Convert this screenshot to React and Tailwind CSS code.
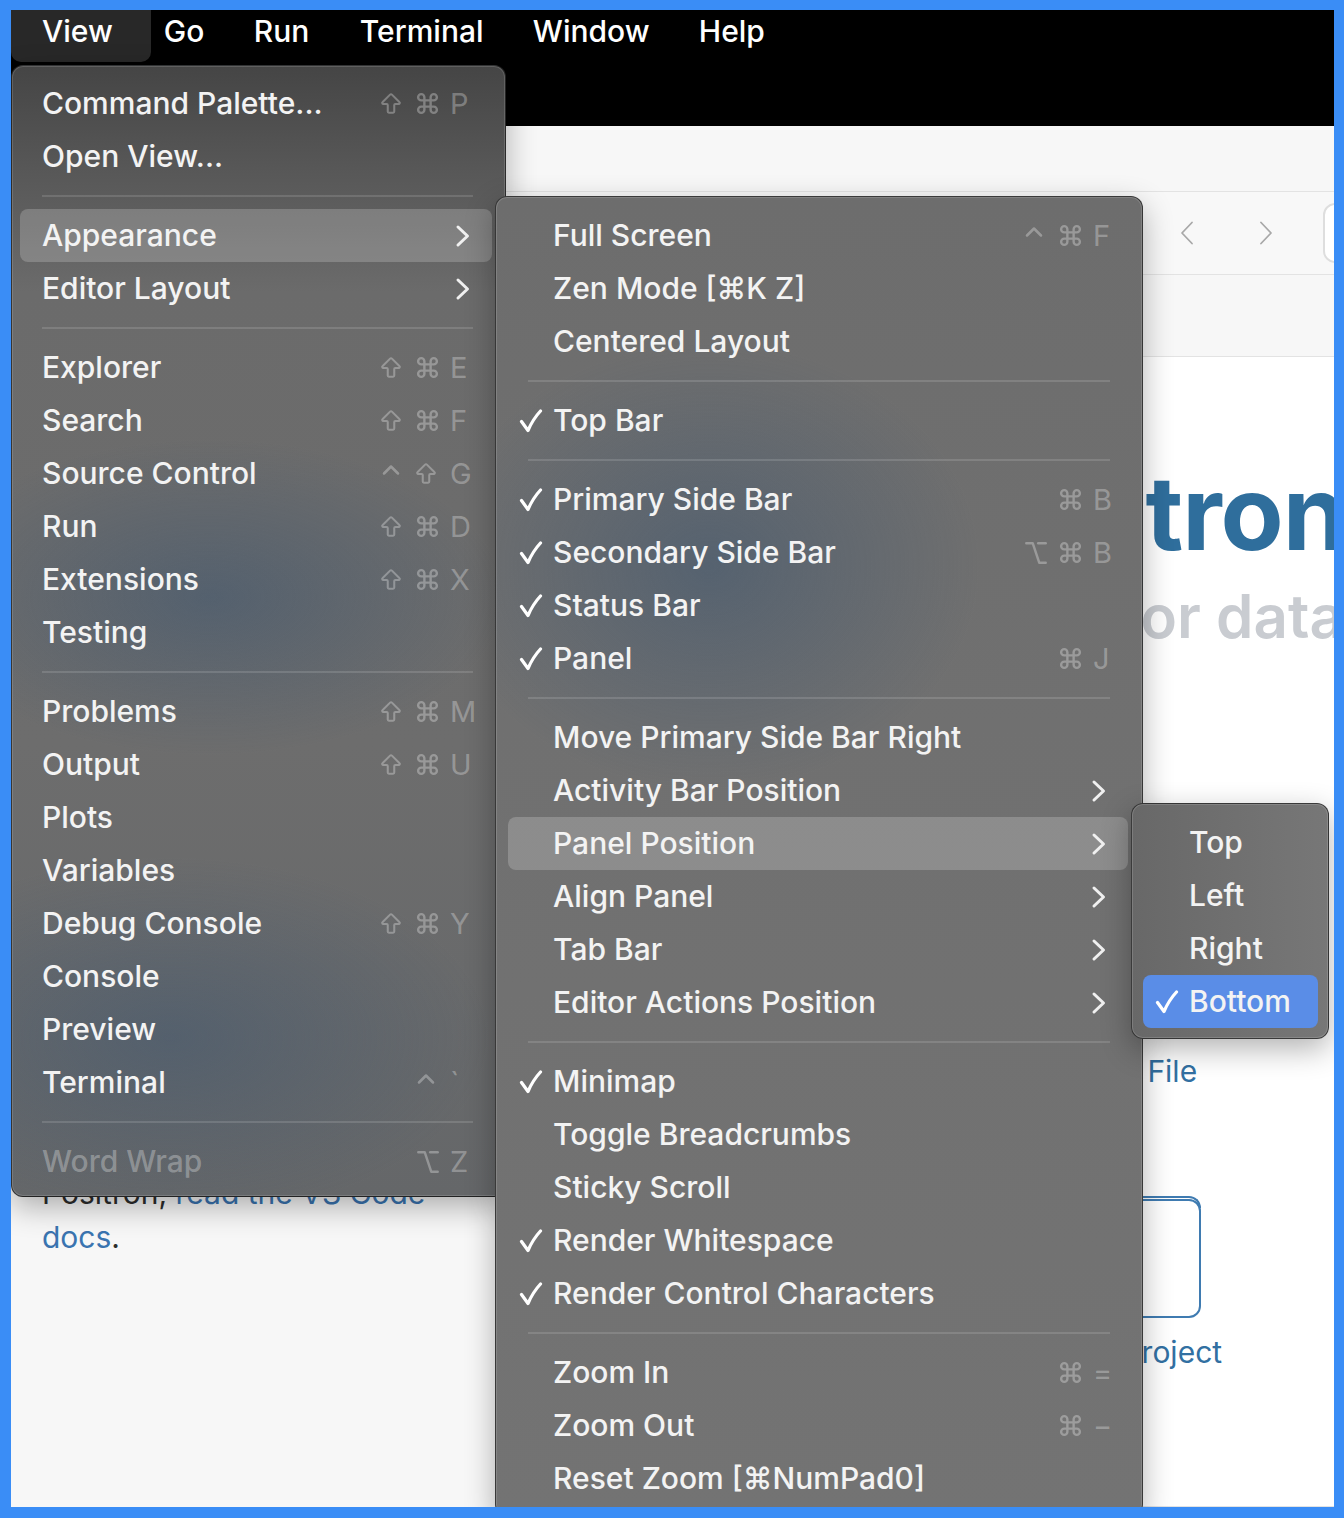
import React from "react";
import { ArrowBigUp, Command, ChevronUp, Option } from "lucide-react";

const SHIFT = "shift";
const CMD = "cmd";
const OPT = "opt";
const CTRL = "ctrl";

const viewMenu = [
  { label: "Command Palette...", keys: [SHIFT, CMD, "P"] },
  { label: "Open View..." },
  "sep",
  { label: "Appearance", sub: true, hl: true },
  { label: "Editor Layout", sub: true },
  "sep",
  { label: "Explorer", keys: [SHIFT, CMD, "E"] },
  { label: "Search", keys: [SHIFT, CMD, "F"] },
  { label: "Source Control", keys: [CTRL, SHIFT, "G"] },
  { label: "Run", keys: [SHIFT, CMD, "D"] },
  { label: "Extensions", keys: [SHIFT, CMD, "X"] },
  { label: "Testing" },
  "sep",
  { label: "Problems", keys: [SHIFT, CMD, "M"] },
  { label: "Output", keys: [SHIFT, CMD, "U"] },
  { label: "Plots" },
  { label: "Variables" },
  { label: "Debug Console", keys: [SHIFT, CMD, "Y"] },
  { label: "Console" },
  { label: "Preview" },
  { label: "Terminal", keys: [CTRL, "`"] },
  "sep",
  { label: "Word Wrap", keys: [OPT, "Z"], disabled: true },
];

const appearanceMenu = [
  { label: "Full Screen", keys: [CTRL, CMD, "F"] },
  { label: "Zen Mode [⌘K Z]" },
  { label: "Centered Layout" },
  "sep",
  { label: "Top Bar", check: true },
  "sep",
  { label: "Primary Side Bar", check: true, keys: [CMD, "B"] },
  { label: "Secondary Side Bar", check: true, keys: [OPT, CMD, "B"] },
  { label: "Status Bar", check: true },
  { label: "Panel", check: true, keys: [CMD, "J"] },
  "sep",
  { label: "Move Primary Side Bar Right" },
  { label: "Activity Bar Position", sub: true },
  { label: "Panel Position", sub: true, hl: true },
  { label: "Align Panel", sub: true },
  { label: "Tab Bar", sub: true },
  { label: "Editor Actions Position", sub: true },
  "sep",
  { label: "Minimap", check: true },
  { label: "Toggle Breadcrumbs" },
  { label: "Sticky Scroll" },
  { label: "Render Whitespace", check: true },
  { label: "Render Control Characters", check: true },
  "sep",
  { label: "Zoom In", keys: [CMD, "="] },
  { label: "Zoom Out", keys: [CMD, "−"] },
  { label: "Reset Zoom [⌘NumPad0]" },
];

const panelMenu = [
  { label: "Top" },
  { label: "Left" },
  { label: "Right" },
  { label: "Bottom", check: true, blue: true },
];

// per-menu paddings (all literal so tailwind picks them up)
const VARIANTS = {
  view: { row: "pl-[22px] pr-[18px]", check: false, chev: "mr-[4px]", sep: "pl-[22px] pr-[19px]" },
  appearance: { row: "pl-[11px] pr-[11px]", check: true, chev: "mr-[11px]", sep: "pl-[20px] pr-[18px]" },
  panel: { row: "pl-[12px] pr-[12px]", check: true, chev: "mr-[4px]", sep: "pl-[20px] pr-[18px]" },
};

const Check = () => (
  <svg viewBox="0 0 24 24" className="w-[24px] h-[24px]" fill="none" stroke="currentColor" strokeWidth={3.2} strokeLinecap="round" strokeLinejoin="round">
    <path d="M2.5 12.5 L9 21.5 Q14 10 21.5 2" />
  </svg>
);

const Chevron = ({ className = "" }) => (
  <svg viewBox="0 0 15 24" className={`ml-auto w-[15px] h-[24px] shrink-0 text-[#f0f0f0] ${className}`} fill="none" stroke="currentColor" strokeWidth={3} strokeLinecap="round" strokeLinejoin="round">
    <path d="M3 3 L12.5 12 L3 21" />
  </svg>
);

const ModKey = ({ k }) => {
  if (k === SHIFT) return <ArrowBigUp className="w-[26px] h-[26px] -ml-[2px]" strokeWidth={1.9} />;
  if (k === CMD) return <Command className="w-[25px] h-[25px]" strokeWidth={2.3} />;
  if (k === CTRL) return <ChevronUp className="w-[28px] h-[28px] -ml-[3px] -mt-[8px]" strokeWidth={2.2} />;
  return <Option className="w-[26px] h-[26px]" strokeWidth={2.2} />;
};

const Keys = ({ keys }) => {
  const mods = keys.slice(0, -1);
  const last = keys[keys.length - 1];
  return (
    <div className="ml-auto flex items-center text-white/30">
      {mods.map((m, i) => (
        <span key={i} className="w-[35px] flex items-center">
          <ModKey k={m} />
        </span>
      ))}
      <span className="w-[24px] text-[29px] leading-none">{last}</span>
    </div>
  );
};

function MenuRow({ item, variant }) {
  const v = VARIANTS[variant];
  let hl = "";
  if (item.hl) hl = "bg-white/20";
  if (item.blue) hl = "bg-[#5a8de7]";
  return (
    <div className={`flex items-center h-[53px] rounded-[8px] ${hl} ${v.row}`}>
      {v.check && (
        <span className="w-[34px] shrink-0 flex items-center text-white">{item.check && <Check />}</span>
      )}
      <span className={`text-[30px] font-medium whitespace-nowrap ${item.disabled ? "text-white/30" : "text-[#f3f3f3]"}`}>{item.label}</span>
      {item.keys && <Keys keys={item.keys} />}
      {item.sub && <Chevron className={v.chev} />}
    </div>
  );
}

function MenuList({ items, variant }) {
  const v = VARIANTS[variant];
  return items.map((item, i) =>
    item === "sep" ? (
      <div key={i} className={`h-[26px] flex items-center ${v.sep}`}>
        <div className="h-[2px] w-full bg-white/[0.13]" />
      </div>
    ) : (
      <MenuRow key={i} item={item} variant={variant} />
    )
  );
}

const ToolbarChevron = ({ left }) => (
  <svg viewBox="0 0 14 24" className="w-[14px] h-[24px] shrink-0 text-[#a8a8a8]" fill="none" stroke="currentColor" strokeWidth={1.8} strokeLinecap="round" strokeLinejoin="round">
    <path d={left ? "M12 1.5 L2 12 L12 22.5" : "M2 1.5 L12 12 L2 22.5"} />
  </svg>
);

export default function App() {
  return (
    <div className="w-[1344px] h-[1518px] bg-[#3a8df6] pl-[11px] pt-[10px] pr-[10px] pb-[11px] font-['Inter','Noto_Sans',sans-serif]">
      <div className="relative w-full h-full overflow-hidden flex flex-col bg-white">
        {/* black title area with the menubar */}
        <div className="h-[116px] bg-black shrink-0">
          <div className="flex items-start h-[52px] text-[30px] font-medium text-white">
            <div className="h-[52px] pl-[31px] pr-[38px] pb-[9px] flex items-center bg-[#282828] rounded-b-[10px]">View</div>
            <span className="ml-[13px] w-[90px] h-[43px] flex items-center">Go</span>
            <span className="w-[106px] h-[43px] flex items-center">Run</span>
            <span className="w-[173px] h-[43px] flex items-center">Terminal</span>
            <span className="w-[166px] h-[43px] flex items-center">Window</span>
            <span className="h-[43px] flex items-center">Help</span>
          </div>
        </div>

        {/* window toolbars */}
        <div className="h-[66px] shrink-0 bg-[#f7f7f7] border-b border-[#e3e3e3]" />
        <div className="h-[83px] shrink-0 bg-[#f8f8f8] border-b border-[#e3e3e3] flex items-center pl-[1169px]">
          <ToolbarChevron left />
          <div className="w-[65px] shrink-0" />
          <ToolbarChevron />
          <div className="ml-[50px] w-[300px] h-[60px] shrink-0 rounded-[12px] border-2 border-[#dedede] bg-white" />
        </div>
        <div className="h-[82px] shrink-0 bg-[#f7f7f7] border-b border-[#e3e3e3]" />

        {/* body */}
        <div className="flex-1 flex min-h-0">
          <div className="w-[790px] shrink-0 bg-[#f7f7f7] pl-[31px] pt-[770px]">
            <p className="text-[30px] leading-[44px] text-[#2d2d2d] whitespace-nowrap">
              Some features are inherited from VS Code, so in
              <br />
              Positron, <span className="text-[#3a74b0]">read the VS Code</span>
              <br />
              <span className="text-[#3a74b0]">docs</span>.
            </p>
          </div>
          <div className="flex-1 bg-white flex flex-col overflow-hidden border-b border-[#e3e3e3]">
            <h1 className="ml-[134px] mt-[104px] text-[103px] leading-none font-bold tracking-[-0.01em] text-[#2f6e9c] whitespace-nowrap">Positron</h1>
            <p className="ml-[120px] mt-[22px] text-[60px] leading-none font-semibold text-[#c9ccd1] whitespace-nowrap">an IDE for data science</p>
            <div className="ml-[245px] mt-[403px] w-[180px] flex flex-col items-center">
              <span className="text-[30px] leading-[45px] text-[#3270a2] whitespace-nowrap">New File</span>
              <div className="mt-[105px] ml-[10px] relative w-[120px] h-[119px] rounded-[12px] border-2 border-[#3f7bb1]">
                <div className="absolute -top-[5px] left-[6px] right-[-2px] h-[12px] rounded-t-[12px] border-t-2 border-r-2 border-[#3f7bb1]" />
              </div>
              <span className="mt-[12px] text-[30px] leading-[45px] text-[#3270a2] whitespace-nowrap">New Project</span>
            </div>
          </div>
        </div>

        {/* View menu */}
        <div className="absolute left-0 top-[55px] w-[495px] z-10 rounded-[12px] border border-black/50 pl-[8px] pr-[13px] pt-[11px] pb-[8px] bg-[#6a6a6a] bg-[image:radial-gradient(ellipse_60%_14%_at_40%_47%,rgba(60,85,112,0.5),transparent_100%),radial-gradient(ellipse_65%_16%_at_32%_86%,rgba(60,85,112,0.45),transparent_100%),linear-gradient(to_bottom,#454545_0%,#575757_9%,#6b6b6b_20%,#6d6d6d_60%,#656769_100%)] shadow-[inset_0_0_0_1px_rgba(255,255,255,0.14),0_10px_30px_rgba(0,0,0,0.3)]">
          <MenuList items={viewMenu} variant="view" />
        </div>

        {/* Appearance submenu */}
        <div className="absolute left-[484px] top-[186px] w-[648px] z-20 rounded-[12px] border border-black/50 pl-[12px] pr-[14px] pt-[12px] pb-[10px] bg-[#707070] bg-[image:radial-gradient(ellipse_42%_17%_at_33%_28%,rgba(60,85,112,0.5),transparent_100%),linear-gradient(to_bottom,#6d6d6d_0%,#707070_40%,#737373_100%)] shadow-[inset_0_0_0_1px_rgba(255,255,255,0.14),0_10px_30px_rgba(0,0,0,0.3)]">
          <MenuList items={appearanceMenu} variant="appearance" />
        </div>

        {/* Panel Position submenu */}
        <div className="absolute left-[1120px] top-[793px] w-[198px] z-30 rounded-[12px] border border-black/50 pl-[11px] pr-[10px] pt-[12px] pb-[10px] bg-[image:linear-gradient(to_right,#686868,#777777)] shadow-[inset_0_0_0_1px_rgba(255,255,255,0.14),0_10px_30px_rgba(0,0,0,0.3)]">
          <MenuList items={panelMenu} variant="panel" />
        </div>
      </div>
    </div>
  );
}
